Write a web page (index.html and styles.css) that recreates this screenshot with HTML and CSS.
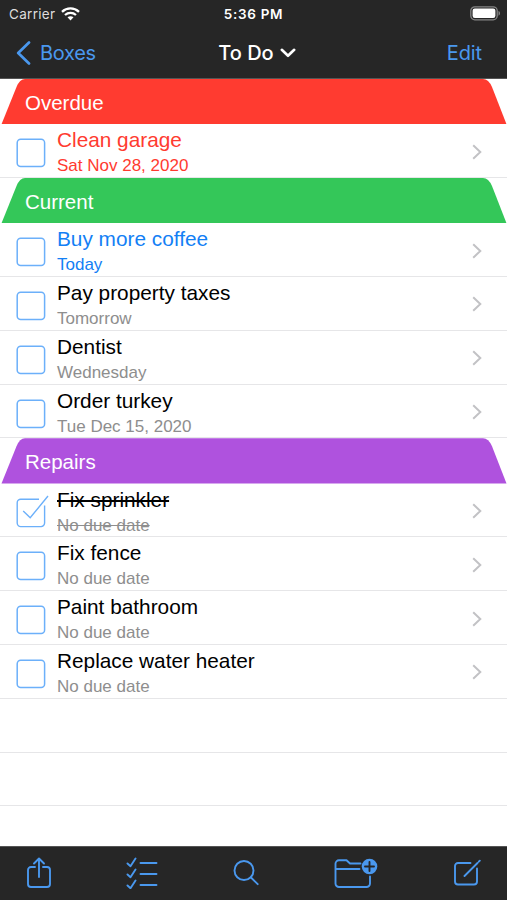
FILE: index.html
```html
<!DOCTYPE html>
<html lang="en">
<head>
    <meta charset="UTF-8">
    <meta name="viewport" content="width=device-width, initial-scale=1.0">
    <title>To Do</title>
    <link rel="stylesheet" href="styles.css">
</head>
<body>
    <svg class="sprite" width="0" height="0">
        <symbol id="chevron" viewBox="0 0 10 16">
            <path d="M1.2 1.3 8.3 8l-7.1 6.7" fill="none" stroke="#c2c2c5" stroke-width="2"/>
        </symbol>
        <symbol id="box" viewBox="0 0 34 34">
            <rect x="1.2" y="4.2" width="27.4" height="27.4" rx="3.5" fill="none" stroke="#6cb0fa" stroke-width="1.5"/>
        </symbol>
        <symbol id="box-checked" viewBox="0 0 34 34">
            <path d="M23 4.2H4.7a3.5 3.5 0 0 0-3.5 3.5v20.4a3.5 3.5 0 0 0 3.5 3.5h20.4a3.5 3.5 0 0 0 3.5-3.5V10.5M7.2 16l7 6.8L32 1" fill="none" stroke="#6cb0fa" stroke-width="1.4"/>
        </symbol>
    </svg>

    <div class="app">
        <header class="header">
            <div class="status-bar">
                <div class="carrier">
                    <span>Carrier</span>
                    <svg width="19" height="14" viewBox="0 0 19 14">
                        <g fill="none" stroke="#fff" stroke-width="2.3">
                            <path d="M1 4.9C5.9.3 13.1.3 18 4.9"/>
                            <path d="M4 8c3.2-2.9 7.8-2.9 11 0"/>
                        </g>
                        <path d="M6.5 10.3c1.8-1.5 4.2-1.5 6 0l-3 3.1z" fill="#fff"/>
                    </svg>
                </div>
                <div class="clock">5:36 PM</div>
                <svg class="battery" width="31" height="15" viewBox="0 0 31 15">
                    <rect x=".8" y=".8" width="26.4" height="13" rx="4" fill="none" stroke="#858585" stroke-width="1.3"/>
                    <rect x="2.6" y="2.6" width="22.8" height="9.4" rx="2.2" fill="#fff"/>
                    <path d="M28.500 5c2 .7 2 4 0 4.700z" fill="#858585"/>
                </svg>
            </div>
            <nav class="nav-bar">
                <div class="back">
                    <svg width="15" height="24" viewBox="0 0 15 24">
                        <path d="M13 1.5 2.2 12 13 22.5" fill="none" stroke="#4a98ee" stroke-width="2.7" stroke-linecap="round" stroke-linejoin="round"/>
                    </svg>
                    <span>Boxes</span>
                </div>
                <div class="title">
                    <span>To Do</span>
                    <svg width="16" height="10" viewBox="0 0 16 10">
                        <path d="m1.800 1.800 6.200 6 6.200-6" fill="none" stroke="#fff" stroke-width="2.6" stroke-linecap="round" stroke-linejoin="round"/>
                    </svg>
                </div>
                <div class="edit">Edit</div>
            </nav>
        </header>

        <main class="list">
            <h2 class="section overdue">Overdue</h2>
            <div class="row late">
                <svg class="check"><use href="#box"/></svg>
                <div class="task">
                    <div class="name">Clean garage</div>
                    <div class="due">Sat Nov 28, 2020</div>
                </div>
                <svg class="chevron"><use href="#chevron"/></svg>
            </div>

            <h2 class="section current">Current</h2>
            <div class="row today">
                <svg class="check"><use href="#box"/></svg>
                <div class="task">
                    <div class="name">Buy more coffee</div>
                    <div class="due">Today</div>
                </div>
                <svg class="chevron"><use href="#chevron"/></svg>
            </div>
            <div class="row">
                <svg class="check"><use href="#box"/></svg>
                <div class="task">
                    <div class="name">Pay property taxes</div>
                    <div class="due">Tomorrow</div>
                </div>
                <svg class="chevron"><use href="#chevron"/></svg>
            </div>
            <div class="row">
                <svg class="check"><use href="#box"/></svg>
                <div class="task">
                    <div class="name">Dentist</div>
                    <div class="due">Wednesday</div>
                </div>
                <svg class="chevron"><use href="#chevron"/></svg>
            </div>
            <div class="row">
                <svg class="check"><use href="#box"/></svg>
                <div class="task">
                    <div class="name">Order turkey</div>
                    <div class="due">Tue Dec 15, 2020</div>
                </div>
                <svg class="chevron"><use href="#chevron"/></svg>
            </div>

            <h2 class="section repairs">Repairs</h2>
            <div class="row done">
                <svg class="check"><use href="#box-checked"/></svg>
                <div class="task">
                    <div class="name">Fix sprinkler</div>
                    <div class="due">No due date</div>
                </div>
                <svg class="chevron"><use href="#chevron"/></svg>
            </div>
            <div class="row">
                <svg class="check"><use href="#box"/></svg>
                <div class="task">
                    <div class="name">Fix fence</div>
                    <div class="due">No due date</div>
                </div>
                <svg class="chevron"><use href="#chevron"/></svg>
            </div>
            <div class="row">
                <svg class="check"><use href="#box"/></svg>
                <div class="task">
                    <div class="name">Paint bathroom</div>
                    <div class="due">No due date</div>
                </div>
                <svg class="chevron"><use href="#chevron"/></svg>
            </div>
            <div class="row">
                <svg class="check"><use href="#box"/></svg>
                <div class="task">
                    <div class="name">Replace water heater</div>
                    <div class="due">No due date</div>
                </div>
                <svg class="chevron"><use href="#chevron"/></svg>
            </div>
            <div class="row"></div>
            <div class="row"></div>
        </main>

        <footer class="toolbar">
            <svg width="26" height="32" viewBox="0 0 26 32">
                <path d="M9 10H5a3 3 0 0 0-3 3v14a3 3 0 0 0 3 3h16a3 3 0 0 0 3-3V13a3 3 0 0 0-3-3h-4M13 20V2M8 6.500l5-5 5 5"/>
            </svg>
            <svg width="32" height="32" viewBox="0 0 32 32">
                <path d="M1.500 6.500 4.500 9.200 9.500 1.500M1.500 17.500l3 2.700 5-7.700M1.500 28.500l3 2.700 5-7.700M14.500 6H30.500M14.500 17H30.500M14.500 28H30.500"/>
            </svg>
            <svg width="28" height="28" viewBox="0 0 28 28">
                <circle cx="11" cy="11.5" r="9.5"/>
                <path d="m18 18.500 6.700 6.700"/>
            </svg>
            <svg width="44" height="32" viewBox="0 0 44 32">
                <path d="M26.500 6.500H16l-3.500-3.200H5a3.500 3.500 0 0 0-3.500 3.500v19.700a3.500 3.500 0 0 0 3.500 3.500h27.500a3.500 3.500 0 0 0 3.500-3.500V19.500M1.500 12h24"/>
                <circle class="badge" cx="35.500" cy="9.500" r="7.800"/>
                <path class="plus" d="M31 9.500h9M35.500 5v9"/>
            </svg>
            <svg width="28" height="28" viewBox="0 0 28 28">
                <path d="M17.500 4H5a3 3 0 0 0-3 3v15.500a3 3 0 0 0 3 3h16a3 3 0 0 0 3-3V9.500M11.500 17 24.500 4M25.800 2.700l1-1"/>
            </svg>
        </footer>
    </div>
</body>
</html>
```

FILE: styles.css
```css
* {
    box-sizing: border-box;
}

body {
    margin: 0;
    font-family: "Liberation Sans", Arial, sans-serif;
    background: #fff;
    color: #000;
}

.sprite {
    display: none;
}

.app {
    display: flex;
    flex-direction: column;
    height: 900px;
    overflow: hidden;
}

.header {
    height: 79px;
    flex: none;
    background: #262626;
    border-bottom: 1px solid #555;
    color: #fff;
    font-family: Inter, sans-serif;
}

.status-bar {
    display: grid;
    grid-template-columns: 1fr auto 1fr;
    align-items: center;
    height: 27px;
    padding: 0 6px;
    font-size: 13.5px;
}

.carrier {
    display: flex;
    align-items: center;
    gap: 6px;
    margin-left: 3px;
    color: #ddd;
    letter-spacing: 0.3px;
}

.clock {
    font-weight: 600;
    letter-spacing: 0.7px;
}

.battery {
    justify-self: end;
}

.nav-bar {
    display: grid;
    grid-template-columns: 1fr auto 1fr;
    align-items: center;
    height: 51px;
    padding: 0 25px 0 32px;
    font-size: 20px;
}

.back {
    display: flex;
    align-items: center;
    gap: 9px;
    margin-left: -16px;
    color: #4a98ee;
    letter-spacing: -0.3px;
}

.title {
    display: flex;
    align-items: center;
    gap: 6px;
    font-weight: 500;
}

.edit {
    justify-self: end;
    color: #4a98ee;
    letter-spacing: -0.1px;
}

.list {
    flex: 1;
    min-height: 0;
    overflow: hidden;
}

.section {
    height: 45.2px;
    margin: 0;
    padding-left: 25px;
    color: #fff;
    font-size: 20.5px;
    font-weight: normal;
    line-height: 48px;
    clip-path: path("M1.5 45.2L16.5 8Q19.8 0 25 0H483Q488.5 0 492 8L506.5 45.2Z");
}

.overdue {
    background: #ff3b30;
}

.current {
    background: #34c759;
}

.repairs {
    background: #af52de;
}

.row {
    display: flex;
    height: 53.8px;
    padding: 0 25px 0 16px;
    border-bottom: 1px solid #e6e6e8;
}

.check {
    width: 34px;
    height: 34px;
    margin: 11px 7px 0 0;
}

.task {
    flex: 1;
}

.name {
    margin-top: 4px;
    font-size: 20.8px;
    line-height: 24px;
}

.due {
    margin-top: 4px;
    color: #8e8e8e;
    font-size: 17px;
    line-height: 20px;
}

.chevron {
    width: 10px;
    height: 16px;
    margin-top: 19.5px;
}

.late .name,
.late .due {
    color: #ff3b30;
}

.today .name,
.today .due {
    color: #1380f5;
}

.done .name,
.done .due {
    text-decoration: line-through;
}

.toolbar {
    display: flex;
    justify-content: space-between;
    align-items: center;
    flex: none;
    height: 54px;
    padding: 0 26px 2px;
    background: #262626;
    border-top: 1px solid #555;
}

.toolbar svg {
    fill: none;
    stroke: #4a98ee;
    stroke-width: 1.9;
    stroke-linecap: round;
    stroke-linejoin: round;
}

.toolbar svg:nth-child(4) {
    margin: 0 1px 0 -1px;
}

.toolbar .badge {
    fill: #4a98ee;
    stroke: none;
}

.toolbar .plus {
    stroke: #262626;
}
```
